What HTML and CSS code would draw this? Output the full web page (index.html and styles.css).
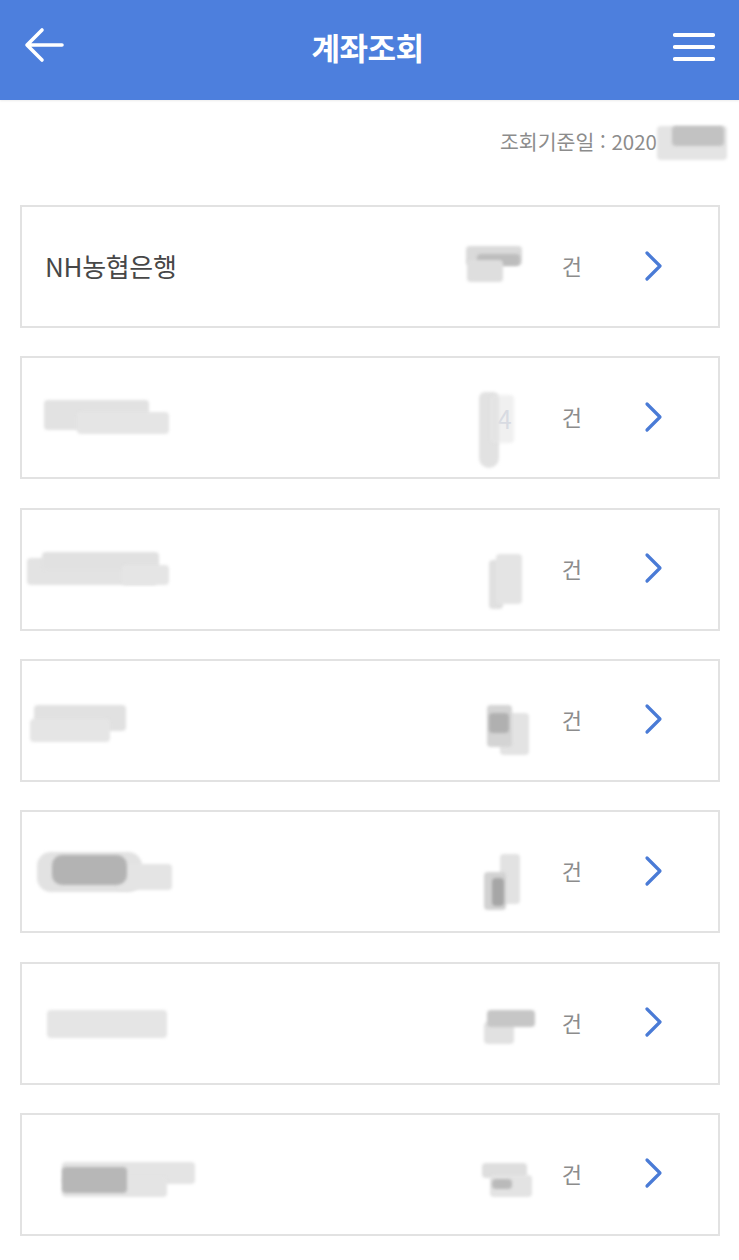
FILE: index.html
```html
<!DOCTYPE html>
<html lang="ko">
<head>
    <meta charset="UTF-8">
    <meta name="viewport" content="width=device-width, initial-scale=1.0">
    <title>계좌조회</title>
    <link rel="stylesheet" href="styles.css">
</head>
<body>
    <header class="topbar">
        <svg class="back" width="44" height="40" viewBox="0 0 44 40">
            <path d="M40 18 H6 M20 3 L5 18 L20 33" fill="none" stroke="#fff" stroke-width="3.6" stroke-linecap="round" stroke-linejoin="round"/>
        </svg>
        <h1>계좌조회</h1>
        <svg class="menu" width="42" height="32" viewBox="0 0 42 32">
            <path d="M2 4 H40 M2 16 H40 M2 28 H40" stroke="#fff" stroke-width="4.2" stroke-linecap="round"/>
        </svg>
    </header>

    <div class="date-line">
        <span>조회기준일 : 2020</span>
        <span class="smudge date-smudge">
            <i class="blob d1"></i>
            <i class="blob d2"></i>
        </span>
    </div>

    <main class="list">
        <div class="card">
            <span class="name">NH농협은행</span>
            <span class="count"></span>
            <span class="unit">건</span>
            <svg class="chevron" width="20" height="32" viewBox="0 0 20 32"><path d="M3 3 L16 16 L3 29" fill="none" stroke="#4a7bd6" stroke-width="3.2" stroke-linecap="round" stroke-linejoin="round"/></svg>
            <div class="redact">
                <i class="blob c1a"></i><i class="blob c1b"></i><i class="blob c1c"></i>
            </div>
        </div>
        <div class="card">
            <span class="name"></span>
            <span class="count faint">4</span>
            <span class="unit">건</span>
            <svg class="chevron" width="20" height="32" viewBox="0 0 20 32"><path d="M3 3 L16 16 L3 29" fill="none" stroke="#4a7bd6" stroke-width="3.2" stroke-linecap="round" stroke-linejoin="round"/></svg>
            <div class="redact">
                <i class="blob n2a"></i><i class="blob n2b"></i>
                <i class="blob c2a"></i><i class="blob c2b"></i>
            </div>
        </div>
        <div class="card">
            <span class="name"></span>
            <span class="count"></span>
            <span class="unit">건</span>
            <svg class="chevron" width="20" height="32" viewBox="0 0 20 32"><path d="M3 3 L16 16 L3 29" fill="none" stroke="#4a7bd6" stroke-width="3.2" stroke-linecap="round" stroke-linejoin="round"/></svg>
            <div class="redact">
                <i class="blob n3a"></i><i class="blob n3b"></i><i class="blob n3c"></i>
                <i class="blob c3a"></i><i class="blob c3b"></i>
            </div>
        </div>
        <div class="card">
            <span class="name"></span>
            <span class="count"></span>
            <span class="unit">건</span>
            <svg class="chevron" width="20" height="32" viewBox="0 0 20 32"><path d="M3 3 L16 16 L3 29" fill="none" stroke="#4a7bd6" stroke-width="3.2" stroke-linecap="round" stroke-linejoin="round"/></svg>
            <div class="redact">
                <i class="blob n4a"></i><i class="blob n4b"></i>
                <i class="blob c4b"></i><i class="blob c4a"></i><i class="blob c4c"></i>
            </div>
        </div>
        <div class="card">
            <span class="name"></span>
            <span class="count"></span>
            <span class="unit">건</span>
            <svg class="chevron" width="20" height="32" viewBox="0 0 20 32"><path d="M3 3 L16 16 L3 29" fill="none" stroke="#4a7bd6" stroke-width="3.2" stroke-linecap="round" stroke-linejoin="round"/></svg>
            <div class="redact">
                <i class="blob n5a"></i><i class="blob n5c"></i><i class="blob n5b"></i>
                <i class="blob c5a"></i><i class="blob c5b"></i><i class="blob c5c"></i>
            </div>
        </div>
        <div class="card">
            <span class="name"></span>
            <span class="count"></span>
            <span class="unit">건</span>
            <svg class="chevron" width="20" height="32" viewBox="0 0 20 32"><path d="M3 3 L16 16 L3 29" fill="none" stroke="#4a7bd6" stroke-width="3.2" stroke-linecap="round" stroke-linejoin="round"/></svg>
            <div class="redact">
                <i class="blob n6a"></i>
                <i class="blob c6b"></i><i class="blob c6a"></i>
            </div>
        </div>
        <div class="card">
            <span class="name"></span>
            <span class="count"></span>
            <span class="unit">건</span>
            <svg class="chevron" width="20" height="32" viewBox="0 0 20 32"><path d="M3 3 L16 16 L3 29" fill="none" stroke="#4a7bd6" stroke-width="3.2" stroke-linecap="round" stroke-linejoin="round"/></svg>
            <div class="redact">
                <i class="blob n7a"></i><i class="blob n7b"></i><i class="blob n7c"></i>
                <i class="blob c7a"></i><i class="blob c7b"></i><i class="blob c7c"></i>
            </div>
        </div>
    </main>
</body>
</html>
```

FILE: styles.css
```css
body {
    margin: 0;
    padding: 0;
    background: #fff;
    font-family: "Noto Sans CJK KR", "Noto Sans", sans-serif;
    color: #444;
}
.topbar {
    height: 100px;
    background: #4d7fdd;
    display: flex;
    align-items: center;
    justify-content: space-between;
    padding: 0 24px 0 22px;
    box-sizing: border-box;
    box-shadow: 0 1px 2px rgba(0, 0, 0, 0.08);
}
.topbar h1 {
    margin: -7px 0 0 0;
    color: #fff;
    font-size: 31px;
    font-weight: 700;
    letter-spacing: -0.5px;
    padding-right: 4px;
}
.back {
    margin-top: -6px;
}
.menu {
    margin-top: -6px;
}
.date-line {
    display: flex;
    justify-content: flex-end;
    align-items: center;
    height: 82px;
    padding: 0 12px 0 0;
    font-size: 20.5px;
    color: #8c8c8c;
    box-sizing: border-box;
}
.smudge {
    position: relative;
    display: inline-block;
}
.date-smudge {
    width: 70px;
    height: 34px;
}
.list {
    display: flex;
    flex-direction: column;
    gap: 28.33px;
    padding: 23px 19px 0 20px;
}
.card {
    position: relative;
    height: 123px;
    border: 2px solid #e2e2e2;
    box-sizing: border-box;
    display: flex;
    align-items: center;
    padding: 0 54px 0 23px;
}
.name {
    flex: 1;
    font-size: 26px;
    color: #474747;
    letter-spacing: -0.3px;
    margin-top: -3px;
}
.count {
    width: 40px;
    text-align: right;
    font-size: 25px;
    color: #4a7bd6;
    margin-right: 50px;
}
.count.faint {
    color: #c3cadb;
}
.unit {
    font-size: 22px;
    color: #8c8c8c;
    margin-top: -3px;
}
.chevron {
    margin-left: 62px;
    margin-top: -2px;
}
.redact {
    position: absolute;
    left: 0;
    top: 0;
    right: 0;
    bottom: 0;
    pointer-events: none;
}
.blob {
    position: absolute;
    display: block;
    border-radius: 4px;
    filter: blur(1.5px);
    background: #e1e1e1;
}

/* date */
.d1 { left: 0; top: 2px; width: 70px; height: 34px; background: #e4e4e4; }
.d2 { left: 15px; top: 2px; width: 52px; height: 20px; background: #c2c2c2; }

/* card 1 */
.c1a { left: 444px; top: 39px; width: 56px; height: 19px; background: #dadada; }
.c1b { left: 455px; top: 47px; width: 43px; height: 12px; background: #bdbdbd; }
.c1c { left: 445px; top: 53px; width: 36px; height: 22px; background: #dedede; }

/* card 2 */
.n2a { left: 22px; top: 42px; width: 105px; height: 30px; background: #e2e2e2; }
.n2b { left: 55px; top: 54px; width: 92px; height: 22px; background: #e5e5e5; }
.c2a { left: 457px; top: 34px; width: 20px; height: 76px; background: #e2e2e2; border-radius: 6px 6px 10px 10px; }
.c2b { left: 468px; top: 37px; width: 24px; height: 48px; background: rgba(230, 230, 230, 0.6); }

/* card 3 */
.n3a { left: 5px; top: 48px; width: 130px; height: 27px; background: #e3e3e3; }
.n3b { left: 20px; top: 42px; width: 117px; height: 18px; background: #e1e1e1; }
.n3c { left: 100px; top: 55px; width: 47px; height: 20px; background: #e5e5e5; }
.c3a { left: 467px; top: 50px; width: 14px; height: 49px; background: #e0e0e0; }
.c3b { left: 474px; top: 44px; width: 26px; height: 50px; background: #e4e4e4; }

/* card 4 */
.n4a { left: 12px; top: 44px; width: 92px; height: 26px; background: #e1e1e1; }
.n4b { left: 8px; top: 58px; width: 80px; height: 23px; background: #e5e5e5; }
.c4a { left: 465px; top: 44px; width: 25px; height: 42px; background: #d4d4d4; }
.c4b { left: 478px; top: 52px; width: 29px; height: 42px; background: #e3e3e3; }
.c4c { left: 467px; top: 52px; width: 20px; height: 20px; background: #b0b0b0; }

/* card 5 */
.n5a { left: 15px; top: 40px; width: 105px; height: 40px; background: #e2e2e2; border-radius: 14px; }
.n5b { left: 30px; top: 43px; width: 75px; height: 30px; background: #b3b3b3; border-radius: 10px; }
.n5c { left: 95px; top: 52px; width: 55px; height: 26px; background: #e4e4e4; }
.c5a { left: 478px; top: 42px; width: 20px; height: 50px; background: #e2e2e2; }
.c5b { left: 462px; top: 60px; width: 22px; height: 38px; background: #d2d2d2; }
.c5c { left: 470px; top: 66px; width: 12px; height: 28px; background: #a6a6a6; }

/* card 6 */
.n6a { left: 25px; top: 46px; width: 120px; height: 28px; background: #e5e5e5; }
.c6a { left: 465px; top: 46px; width: 48px; height: 17px; background: #c6c6c6; }
.c6b { left: 462px; top: 58px; width: 30px; height: 22px; background: #e1e1e1; }

/* card 7 */
.n7a { left: 40px; top: 47px; width: 133px; height: 22px; background: #e4e4e4; }
.n7b { left: 40px; top: 62px; width: 105px; height: 20px; background: #e4e4e4; }
.n7c { left: 40px; top: 52px; width: 65px; height: 26px; background: #b7b7b7; }
.c7a { left: 460px; top: 48px; width: 45px; height: 15px; background: #dedede; }
.c7b { left: 468px; top: 60px; width: 42px; height: 22px; background: #e3e3e3; }
.c7c { left: 470px; top: 64px; width: 20px; height: 10px; background: #bababa; }
```
